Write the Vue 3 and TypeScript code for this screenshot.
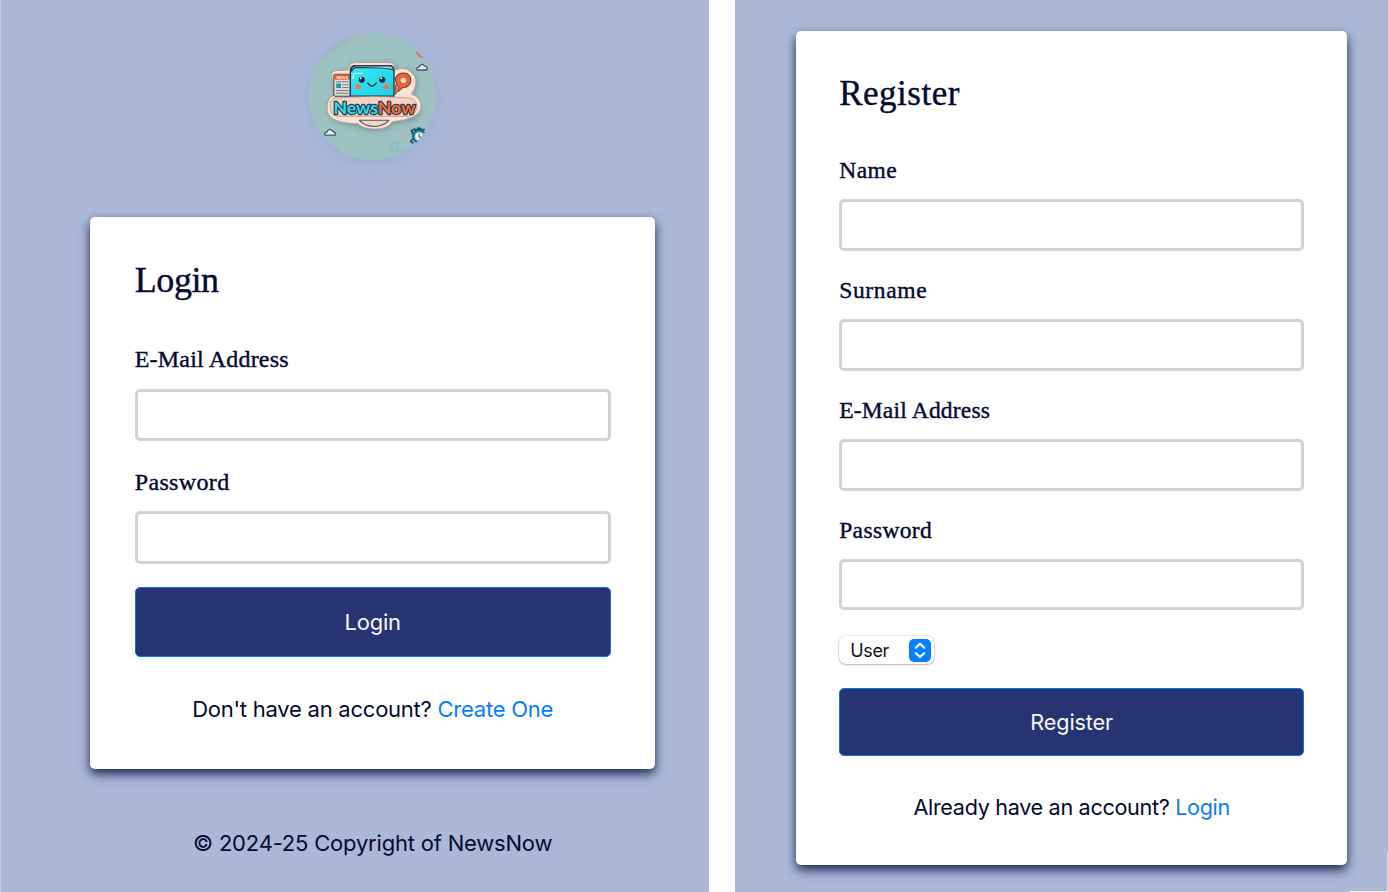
<script setup lang="ts">
interface Field {
  id: string
  label: string
  type: string
  tracking: number
}

const loginFields: Field[] = [
  { id: 'login-email', label: 'E-Mail Address', type: 'email', tracking: 0.2 },
  { id: 'login-password', label: 'Password', type: 'password', tracking: 0.35 },
]

const registerFields: Field[] = [
  { id: 'name', label: 'Name', type: 'text', tracking: 0.5 },
  { id: 'surname', label: 'Surname', type: 'text', tracking: 0.65 },
  { id: 'email', label: 'E-Mail Address', type: 'email', tracking: 0.2 },
  { id: 'password', label: 'Password', type: 'password', tracking: 0.35 },
]
</script>

<template>
  <main class="screens">
    <section class="panel login">
      <svg class="logo" viewBox="31 27 378 378" role="img" aria-label="NewsNow">
        <defs>
          <clipPath id="disc"><circle cx="220" cy="216" r="189" /></clipPath>
          <linearGradient id="book" x1="0" y1="0" x2="1" y2="1">
            <stop offset="0" stop-color="#35e9fa" />
            <stop offset="1" stop-color="#20cfe2" />
          </linearGradient>
          <filter id="soft" x="-20%" y="-20%" width="140%" height="140%"><feGaussianBlur stdDeviation="9" /></filter>
          <filter id="smooth"><feGaussianBlur stdDeviation="1" /></filter>
        </defs>
        <g clip-path="url(#disc)">
          <rect x="31" y="27" width="378" height="378" fill="#9dc2c1" />
          <path d="M31 27H170L60 110L31 150Z" fill="#91b6b9" filter="url(#soft)" />
          <path d="M346 82l14 3 12 19-14-6z" fill="#e6696a" />
          <path d="M108 160Q108 145 125 147L152 145Q154 124 168 120H274Q290 124 290 142Q335 125 350 165Q352 205 335 218Q366 232 362 265Q354 290 280 297Q262 318 225 318Q190 314 178 303Q95 296 92 260Q88 228 108 218Z" fill="#577f86" opacity=".65" filter="url(#soft)" />
          <g filter="url(#smooth)">
            <path d="M99 153Q99 139 113 139L148 137Q151 118 166 115H272Q286 118 288 137Q325 122 347 158Q353 187 336 209Q367 219 364 250Q358 283 279 291Q266 314 225 313Q190 311 176 297Q88 296 85 255Q83 220 105 212Z" fill="#fbe3d5" stroke="#b58f82" stroke-width="2" />
            <rect x="105" y="150" width="49" height="65" rx="4" fill="#ecd9cd" stroke="#284151" stroke-width="3" />
            <path d="M106 151h48v15h-48z" fill="#e85c35" />
            <text x="112" y="163" class="tiny" textLength="35" lengthAdjust="spacingAndGlyphs">NEWS</text>
            <path d="M111 172h38M130 181h19M130 189h19M111 198h38M111 206h38" stroke="#5e8390" stroke-width="3" />
            <rect x="112" y="177" width="14" height="14" fill="#1c96b2" />
            <path d="M154 215V137Q155 126 166 124H273Q283 126 284 137V215Z" fill="url(#book)" stroke="#193849" stroke-width="4" />
            <path d="M156 140Q157 126 169 125H273Q283 127 282 138Q276 130 170 130Q160 132 158 141Z" fill="#b6d7dd" stroke="#26394b" stroke-width="3" />
            <path d="M166 147H190M163 151V162" stroke="#c9ffff" stroke-width="4" stroke-linecap="round" />
            <circle cx="188" cy="166" r="9" fill="#162939" /><circle cx="249" cy="166" r="9" fill="#162939" />
            <circle cx="185" cy="162" r="3" fill="#fff" /><circle cx="246" cy="162" r="3" fill="#fff" />
            <circle cx="177" cy="186" r="8" fill="#ff7043" /><circle cx="261" cy="186" r="8" fill="#ff7043" />
            <path d="M206 176Q218 194 231 176" fill="none" stroke="#182a38" stroke-width="4" stroke-linecap="round" />
            <path d="M289 160Q296 145 315 146Q336 150 334 171Q329 190 309 190L295 202L297 187Q287 176 289 160Z" fill="#f0602f" stroke="#5a4048" stroke-width="3" stroke-linejoin="round" />
            <circle cx="312" cy="168" r="8" fill="#ffe8db" />
            <path d="M285 181h7v29h-7z" fill="#bd4431" />
            <path d="M106 221Q220 211 333 221Q354 229 353 247Q350 270 326 275H114Q94 269 94 247Q94 225 106 221Z" fill="#f8d2c0" stroke="#a98579" stroke-width="2" />
            <path d="M181 287H269Q254 304 225 305Q195 304 181 287Z" fill="#f3d6c8" stroke="#4f5458" stroke-width="3" stroke-linejoin="round" />
            <text x="104" y="267" class="word" textLength="244" lengthAdjust="spacingAndGlyphs"><tspan fill="#27dced">News</tspan><tspan fill="#f46b3c">Now</tspan></text>
          </g>
          <g fill="#e9f1ed" stroke="#38586b" stroke-width="4" stroke-linejoin="round">
            <path d="M353 137Q349 129 359 128Q365 114 375 125Q385 128 382 137Z" />
            <path d="M78 331Q75 323 84 322Q91 307 101 319Q112 323 109 331Z" />
          </g>
          <g stroke="#194f66" stroke-width="5">
            <path d="M340 327l-4-9 9-5 6 5 5-8 8 2 1 7 10-6M339 342l-5 8 8 5" fill="none" />
            <circle cx="359" cy="334" r="19" fill="#1ca4b6" stroke-width="4" />
            <circle cx="359" cy="335" r="12" fill="#f4f7ed" stroke="none" />
            <path d="M359 327v9l6 3" fill="none" stroke-width="3" />
          </g>
          <path d="M274 352l12-4 12 5v13l5 16-15-3-14 5z" fill="#82bac6" opacity=".7" />
          <circle cx="287" cy="366" r="7" fill="#99c3c8" />
        </g>
      </svg>

      <form class="card" @submit.prevent>
        <h1>Login</h1>
        <div v-for="field in loginFields" :key="field.id" class="field">
          <label :for="field.id" :style="{ letterSpacing: field.tracking + 'px' }">{{ field.label }}</label>
          <input :id="field.id" :type="field.type" />
        </div>
        <button type="submit">Login</button>
        <p class="switch">Don't have an account? <a href="#">Create One</a></p>
      </form>
      <footer>© 2024-25 Copyright of NewsNow</footer>
    </section>

    <section class="panel register">
      <form class="card" @submit.prevent>
        <h1>Register</h1>
        <div v-for="field in registerFields" :key="field.id" class="field">
          <label :for="field.id" :style="{ letterSpacing: field.tracking + 'px' }">{{ field.label }}</label>
          <input :id="field.id" :type="field.type" />
        </div>
        <div class="role" tabindex="0" role="combobox" aria-label="Role">
          <span>User</span>
          <svg viewBox="0 0 22 23" aria-hidden="true">
            <rect width="22" height="23" rx="5" fill="#087fff" />
            <path d="M6.8 8.7L11 4.8L15.2 8.7M6.8 14.2L11 18.1L15.2 14.2" fill="none" stroke="#fff" stroke-width="2.1" stroke-linecap="round" stroke-linejoin="round" />
          </svg>
        </div>
        <button type="submit">Register</button>
        <p class="switch">Already have an account? <a href="#">Login</a></p>
      </form>
    </section>
  </main>
</template>

<style>
html,
body {
  margin: 0;
  background: #fff;
  overflow: hidden;
}
</style>

<style scoped>
* {
  box-sizing: border-box;
}
.screens {
  display: flex;
  justify-content: space-between;
  width: 1388px;
  height: 892px;
  overflow: hidden;
  color: #050a30;
  font-family: Inter, 'Liberation Sans', sans-serif;
  font-size: 22px;
  letter-spacing: -0.24px;
}
.panel {
  background: #abb9d7;
  display: flex;
  flex-direction: column;
  align-items: flex-start;
  overflow: hidden;
}
.login {
  width: 709.4px;
  padding: 33px 0 0 89.4px;
  border-left: 1px solid #c3cce3;
}
.register {
  position: relative;
  width: 653px;
  padding: 31px 0 0 61px;
}
.register::after {
  content: '';
  position: absolute;
  right: 0;
  bottom: 0;
  width: 38px;
  height: 39px;
  border-right: 1px solid #dce2ef;
  border-bottom: 1px solid #f3f5fa;
}
.logo {
  flex: none;
  width: 127px;
  height: 127px;
  margin: 0 0 56.5px 218.6px;
  border-radius: 50%;
  box-shadow: 0 4px 16px rgb(100 115 175 / 18%);
}
.word {
  font: 900 52px Lato, sans-serif;
  letter-spacing: 0;
  paint-order: stroke;
  stroke: #273b4b;
  stroke-width: 7px;
  stroke-linejoin: round;
}
.tiny {
  font: 900 11px Lato, sans-serif;
  letter-spacing: 0;
  fill: #fff0e4;
}
.card {
  flex: none;
  background: #fff;
  border-radius: 5px;
  box-shadow: 0 5px 11px #1b2658;
}
.login .card {
  width: 564.5px;
  height: 552.5px;
  padding: 43px 44.3px 0;
}
.register .card {
  width: 551.4px;
  height: 834.4px;
  padding: 43px 43.2px 0;
  font-size: 21.6px;
  letter-spacing: -0.32px;
}
h1,
label {
  font-family: 'Liberation Serif', serif;
  font-weight: 400;
  -webkit-text-stroke: 0.4px #050a30;
}
h1 {
  margin: 0;
  line-height: 40px;
}
.login h1 {
  font-size: 36px;
  letter-spacing: -0.4px;
  margin-bottom: 45.4px;
}
.register h1 {
  font-size: 35px;
  letter-spacing: 0.5px;
  margin-bottom: 42.4px;
}
.field {
  display: flex;
  flex-direction: column;
}
label {
  height: 28px;
  line-height: 28px;
}
.login label {
  font-size: 24px;
  margin-bottom: 15.7px;
}
.register label {
  font-size: 23.5px;
  margin-bottom: 15.1px;
}
input {
  width: 100%;
  border: 3px solid #cdd4da;
  border-radius: 5px;
  background: #fff;
  padding: 0 12px;
  font: inherit;
  outline: none;
}
.login input {
  height: 52.5px;
  margin-bottom: 26.5px;
}
.register input {
  height: 51.5px;
  margin-bottom: 25.2px;
}
button {
  display: block;
  width: 100%;
  border: 1.5px solid #0875f5;
  border-radius: 5px;
  background: #263571;
  color: #f7f8fc;
  font: inherit;
  letter-spacing: inherit;
  padding: 0;
}
.login button {
  height: 70px;
  margin-top: -3.4px;
  padding-top: 1px;
}
.register button {
  height: 68.6px;
  padding-top: 1px;
  letter-spacing: -0.12px;
}
.switch {
  margin: 38px 0 0;
  line-height: 28px;
  text-align: center;
  white-space: nowrap;
}
.register .switch {
  margin-top: 36.4px;
}
a {
  color: #087dff;
  text-decoration: none;
}
footer {
  width: 564.5px;
  margin-top: 59.8px;
  line-height: 28px;
  text-align: center;
  letter-spacing: -0.2px;
}
.role {
  display: flex;
  align-items: center;
  justify-content: space-between;
  width: 95px;
  height: 28px;
  margin-bottom: 24px;
  padding: 1px 3px 0 11px;
  border-radius: 7px;
  background: #fff;
  box-shadow: 0 0 2px rgb(0 0 0 / 25%), 0 1px 2px rgb(0 0 0 / 22%);
  color: #111;
  font-size: 18px;
}
.role span {
  padding-top: 1px;
}
.role svg {
  width: 22px;
  height: 23px;
}
</style>
